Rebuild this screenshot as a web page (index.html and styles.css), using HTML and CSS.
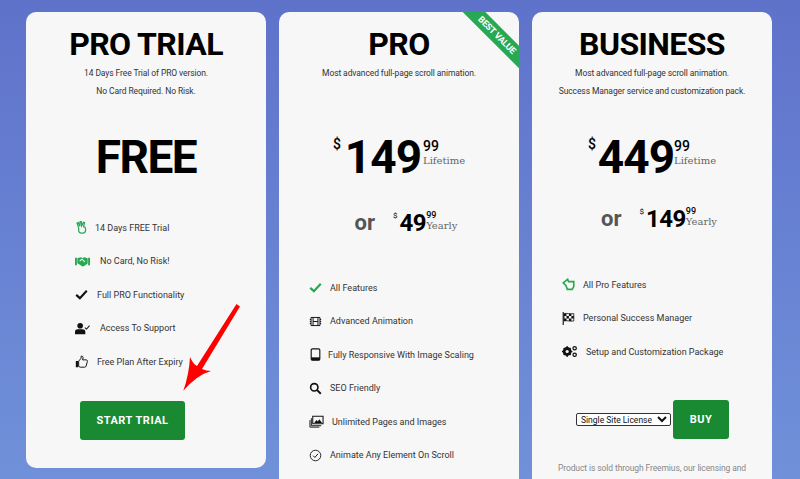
FILE: index.html
```html
<!DOCTYPE html>
<html>
<head>
  <title>Pricing</title>
  <link rel="stylesheet" href="styles.css">
</head>
<body>
  <div class="pricing">

    <!-- Trial -->
    <div class="card card-trial">
      <h2>PRO TRIAL</h2>
      <p class="desc">14 Days Free Trial of PRO version.</p>
      <p class="desc">No Card Required. No Risk.</p>
      <div class="free">FREE</div>
      <ul class="features">
        <li class="row-a">
          <svg class="icon green" viewBox="0 0 16 16"><path d="M4.500 8.500 2.500 2.500 4 2l2 4.500L6.300.8h1.500l.4 5.200L10.500 1.500l1.300.6L10.500 7c1.500.2 2.500 1 2.500 2.500v2c0 2-1.500 3.500-3.500 3.500H8c-2 0-3.500-1.500-3.500-3.500z" fill="none" stroke="currentColor" stroke-width="1.500"/></svg>
          <span>14 Days FREE Trial</span>
        </li>
        <li class="row-b">
          <svg class="icon wide green" viewBox="0 0 16 12"><path d="M0 2h2v8H0zM14 2h2v8h-2zM2.500 2.500 6 1.500l2 .8 2-.8 3.500 1V8l-4 3-1.500.3L3.500 8.500 2.500 8z" fill="currentColor"/><path d="M5 5.500 7.500 3.500l3 3" fill="none" stroke="#f7f7f7" stroke-width="1.200"/></svg>
          <span>No Card, No Risk!</span>
        </li>
        <li class="row-c">
          <svg class="icon" viewBox="0 0 16 16"><path d="M1.500 8.500 6 12.500 14.500 3.500" fill="none" stroke="currentColor" stroke-width="2.600"/></svg>
          <span>Full PRO Functionality</span>
        </li>
        <li class="row-b">
          <svg class="icon wide" viewBox="0 0 16 12"><circle cx="5.500" cy="3" r="3" fill="currentColor"/><path d="M0 12V9.500C0 7.500 1.500 6.800 3 6.800h5c1.500 0 3 .7 3 2.700V12z" fill="currentColor"/><path d="m10.500 5 1.800 1.600L15.500 3" fill="none" stroke="currentColor" stroke-width="1.100"/></svg>
          <span>Access To Support</span>
        </li>
        <li class="row-c">
          <svg class="icon" viewBox="0 0 16 16"><path d="M1 7.500h3v7.500H1z" fill="currentColor"/><path d="M4.500 7.500 7.500 4V1.500c1.500-.5 2.500.5 2.500 2L9.300 6H14c1 0 1.500 1 1.200 2l-1.500 5.500c-.3 1-.8 1.500-2 1.500H6.500l-2-1z" fill="none" stroke="currentColor" stroke-width="1.200"/></svg>
          <span>Free Plan After Expiry</span>
        </li>
      </ul>
      <a class="btn btn-trial" href="#">START TRIAL</a>
    </div>

    <!-- Pro -->
    <div class="card card-pro">
      <div class="ribbon">BEST VALUE</div>
      <h2>PRO</h2>
      <p class="desc">Most advanced full-page scroll animation.</p>
      <div class="price">
        <span class="dollar">$</span>
        <span class="amount">149</span>
        <span class="extra"><b>99</b><i>Lifetime</i></span>
      </div>
      <div class="price-small">
        <span class="or">or</span>
        <span class="dollar">$</span>
        <span class="amount">49</span>
        <span class="extra"><b>99</b><i>Yearly</i></span>
      </div>
      <ul class="features">
        <li class="row-d">
          <svg class="icon green" viewBox="0 0 16 16"><path d="M1.500 8.500 6 12.500 14.500 3.500" fill="none" stroke="currentColor" stroke-width="2.800"/></svg>
          <span>All Features</span>
        </li>
        <li class="row-d">
          <svg class="icon" viewBox="0 0 16 16"><path d="M2.500 3h11v10h-11zM5 3v10M11 3v10M5 8h6M1 5.500h1.500M1 8h1.500M1 10.500h1.500M13.500 5.500H15M13.500 8H15M13.500 10.500H15" fill="none" stroke="currentColor" stroke-width="1.200"/></svg>
          <span>Advanced Animation</span>
        </li>
        <li class="row-e">
          <svg class="icon" viewBox="0 0 16 16"><rect x="2.700" y="1" width="10.600" height="14" rx="1.500" fill="none" stroke="currentColor" stroke-width="1.400"/><rect x="2.700" y="11.500" width="10.600" height="3.500" fill="currentColor"/></svg>
          <span>Fully Responsive With Image Scaling</span>
        </li>
        <li class="row-d">
          <svg class="icon" viewBox="0 0 16 16"><circle cx="6.500" cy="6.500" r="4.500" fill="none" stroke="currentColor" stroke-width="2"/><path d="m10 10 4.500 4.500" stroke="currentColor" stroke-width="2.400"/></svg>
          <span>SEO Friendly</span>
        </li>
        <li class="row-f">
          <svg class="icon wide" viewBox="0 0 16 13"><path d="M4 1h11v8H4z" fill="none" stroke="currentColor" stroke-width="1.100"/><path d="M2.500 3v8H13M1 5v7.500h10" fill="none" stroke="currentColor" stroke-width="1"/><path d="M5.500 8 8 5l1.500 1.500L11 4l3 4z" fill="currentColor"/></svg>
          <span>Unlimited Pages and Images</span>
        </li>
        <li class="row-d">
          <svg class="icon" viewBox="0 0 16 16"><circle cx="8" cy="8" r="6.500" fill="none" stroke="currentColor" stroke-width="1.100"/><path d="m5 8.200 2.200 2.200L11 6" fill="none" stroke="currentColor" stroke-width="1.200"/></svg>
          <span>Animate Any Element On Scroll</span>
        </li>
      </ul>
    </div>

    <!-- Business -->
    <div class="card card-business">
      <h2>BUSINESS</h2>
      <p class="desc">Most advanced full-page scroll animation.</p>
      <p class="desc">Success Manager service and customization pack.</p>
      <div class="price">
        <span class="dollar">$</span>
        <span class="amount">449</span>
        <span class="extra"><b>99</b><i>Lifetime</i></span>
      </div>
      <div class="price-small">
        <span class="or">or</span>
        <span class="dollar">$</span>
        <span class="amount">149</span>
        <span class="extra"><b>99</b><i>Yearly</i></span>
      </div>
      <ul class="features">
        <li class="row-d">
          <svg class="icon green" viewBox="0 0 16 16"><path d="M1.500 6 7 1.500l1 3h6.500v6l-2 3.500H6.500L5 9.500z" fill="none" stroke="currentColor" stroke-width="2"/></svg>
          <span>All Pro Features</span>
        </li>
        <li class="row-d">
          <svg class="icon" viewBox="0 0 16 16"><path d="M1.500 0v16" stroke="currentColor" stroke-width="1.400"/><path d="M2.500 2c4-1 7 1 12 0v9c-5 1-8-1-12 0z" fill="none" stroke="currentColor" stroke-width="1"/><path d="M2.500 2h3v3h-3zM8.500 2h3v3h-3zM5.500 5h3v3h-3zM11.500 5h3v3h-3zM2.500 8h3v3h-3zM8.500 8h3v3h-3z" fill="currentColor"/></svg>
          <span>Personal Success Manager</span>
        </li>
        <li class="row-g">
          <svg class="icon wide" viewBox="0 0 16 13"><circle cx="5.500" cy="6.500" r="3.500" fill="none" stroke="currentColor" stroke-width="2.400"/><path d="M5.500 1v11M0 6.500h11M1.800 2.800l7.400 7.400M9.200 2.800l-7.400 7.400" stroke="currentColor" stroke-width="1.800"/><circle cx="5.500" cy="6.500" r="1.700" fill="#f7f7f7"/><circle cx="13.500" cy="3" r="1.800" fill="none" stroke="currentColor" stroke-width="1.300"/><circle cx="13.500" cy="10" r="1.800" fill="none" stroke="currentColor" stroke-width="1.300"/></svg>
          <span>Setup and Customization Package</span>
        </li>
      </ul>
      <div class="buy-row">
        <select class="license"><option>Single Site License</option></select>
        <a class="btn btn-buy" href="#">BUY</a>
      </div>
      <p class="note">Product is sold through Freemius, our licensing and</p>
    </div>
  </div>

  <!-- red arrow drawn over the trial card -->
  <svg class="arrow" viewBox="0 0 70 100"><path d="M61.500 4 65 6.500 27 69q4 2 9 2-14 4-27.700 19.700Q14 75 15 57q3 7 7 9z" fill="#fe0000"/></svg>
</body>
</html>
```

FILE: styles.css
```css
html, body {
  height: 479px;
  overflow: hidden;
}

body {
  margin: 0;
  background: linear-gradient(180deg, #5f72ca 0%, #7091da 100%);
  font-family: Roboto, Arial, sans-serif;
  color: #333;
  position: relative;
}

.pricing {
  display: flex;
  gap: 13px;
  padding: 12px 0 0 26px;
  align-items: flex-start;
}

.card {
  position: relative;
  box-sizing: border-box;
  width: 240px;
  height: 456px;
  flex: none;
  padding-top: 12px;
  background-color: #f7f7f7;
  border-radius: 10px;
  overflow: hidden;
  text-align: center;
}

.card-pro, .card-business {
  height: 600px;
}

.card h2 {
  margin: 0;
  font-size: 32px;
  line-height: 40px;
  font-weight: 700;
  letter-spacing: -0.6px;
  color: #000;
}

.desc {
  margin: 0;
  font-size: 8.500px;
  line-height: 18px;
  letter-spacing: -0.1px;
  color: #333;
}

.free {
  margin-top: 29px;
  font-size: 46px;
  line-height: 56px;
  font-weight: 700;
  letter-spacing: -1.500px;
  color: #000;
}

/* prices */
.price, .price-small {
  display: flex;
  justify-content: center;
  align-items: flex-start;
  color: #000;
}

.price {
  margin-top: 47px;
  height: 56px;
}

.card-business .price {
  margin-top: 29px;
}

.price .dollar {
  font-size: 14px;
  line-height: 16px;
  margin: 7px 4px 0 0;
  font-weight: 500;
}

.card-business .price .dollar {
  margin-right: 2px;
}

.price .amount {
  font-size: 46px;
  line-height: 56px;
  font-weight: 700;
  letter-spacing: -1px;
}

.extra {
  display: flex;
  flex-direction: column;
  align-items: flex-start;
  text-align: left;
}

.extra b {
  font-weight: 500;
  color: #000;
}

.extra i {
  font-family: "DejaVu Serif", "Liberation Serif", serif;
  font-style: normal;
  color: #666;
}

.price .extra {
  margin: 9px 0 0 2px;
}

.card-business .price .extra {
  margin-left: 0;
}

.price .extra b {
  font-size: 14px;
  line-height: 17px;
}

.price .extra i {
  font-size: 10px;
  line-height: 12px;
}

.price-small {
  margin-top: 23px;
  height: 30px;
  padding-left: 14px;
}

.card-business .price-small {
  margin-top: 19px;
}

.or {
  font-size: 22px;
  line-height: 30px;
  font-weight: 700;
  color: #555;
  margin-right: 18px;
}

.price-small .dollar {
  font-size: 8px;
  line-height: 10px;
  margin: 3px 2px 0 0;
}

.price-small .amount {
  font-size: 24px;
  line-height: 30px;
  font-weight: 700;
  letter-spacing: -0.5px;
}

.price-small .extra {
  margin: 3px 0 0 0;
}

.price-small .extra b {
  font-size: 9px;
  line-height: 9px;
}

.price-small .extra i {
  font-size: 10px;
  line-height: 11px;
}

/* feature lists */
.features {
  list-style: none;
  margin: 0;
  padding: 0;
  font-size: 9px;
  text-align: left;
}

.features li {
  display: flex;
  align-items: center;
  height: 33.500px;
  color: #333;
}

.card-trial .features {
  margin: 26px 0 0 49px;
}

.card-pro .features {
  margin-top: 33px;
  margin-left: 30px;
}

.card-business .features {
  margin-top: 34px;
  margin-left: 30px;
}

.icon {
  width: 13px;
  height: 13px;
  flex: none;
  color: #111;
}

.icon.wide {
  width: 15px;
}

.icon.green {
  color: #27a853;
}

.row-a .icon { margin-right: 7px; }
.row-b .icon { margin-right: 10px; }
.row-c .icon { margin-right: 9px; }
.row-d .icon { margin-right: 8px; }
.row-e .icon { margin-right: 6px; }
.row-f .icon { margin-right: 8px; }
.row-g .icon { margin-right: 9px; }

/* buttons */
.btn {
  display: block;
  box-sizing: border-box;
  background-color: #198a32;
  color: #fff;
  font-size: 11px;
  font-weight: 700;
  letter-spacing: 0.5px;
  line-height: 39px;
  height: 39px;
  border-radius: 3px;
  text-decoration: none;
  text-align: center;
}

.btn-trial {
  width: 105px;
  margin: 22px 0 0 54px;
}

.buy-row {
  display: flex;
  align-items: center;
  margin: 31px 0 0 44px;
}

.license {
  width: 95px;
  height: 13px;
  padding: 0;
  font-family: Roboto, Arial, sans-serif;
  font-size: 8.500px;
  background: #fff;
  border: 1px solid #333;
  border-radius: 2px;
  color: #111;
}

.btn-buy {
  width: 56px;
  margin-left: 2px;
}

.note {
  margin: 20px 10px 0;
  font-size: 8.500px;
  line-height: 18px;
  letter-spacing: -0.1px;
  color: #888;
}

/* corner ribbon */
.ribbon {
  position: absolute;
  top: 15px;
  right: -33px;
  width: 110px;
  height: 16px;
  line-height: 16px;
  background-color: #27a853;
  color: #fff;
  font-size: 9px;
  font-weight: 700;
  letter-spacing: -0.2px;
  transform: rotate(45deg);
}

.arrow {
  position: absolute;
  left: 175px;
  top: 300px;
  width: 70px;
  height: 100px;
}
```
